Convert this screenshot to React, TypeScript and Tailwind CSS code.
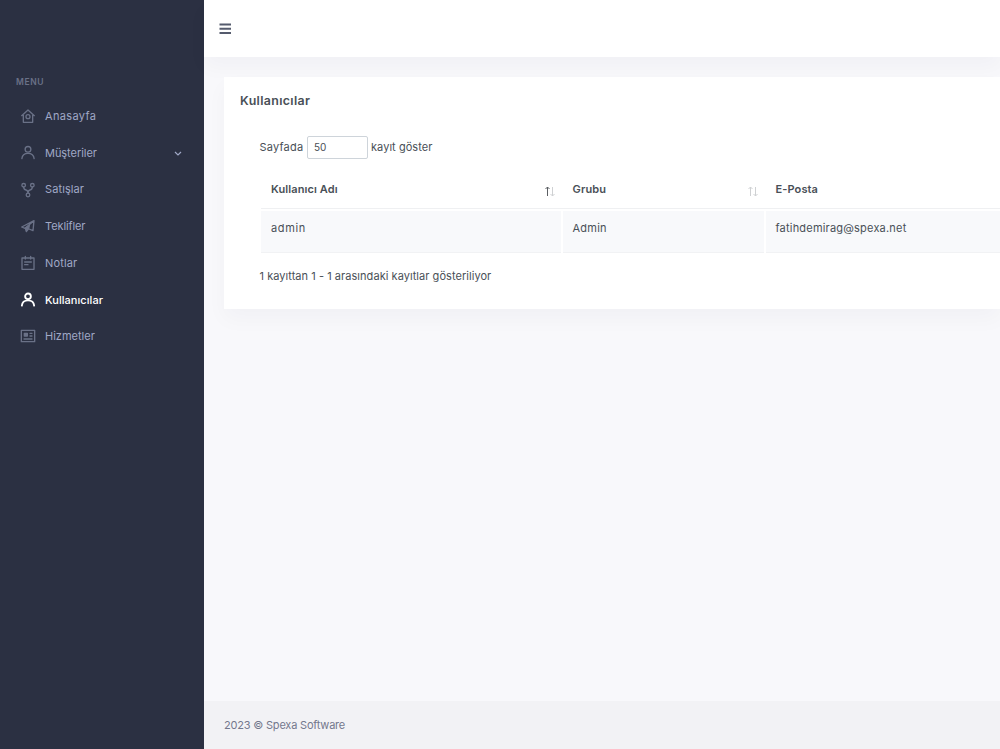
import React from "react";

interface MenuItem {
  label: string;
  icon: React.ReactNode;
  tracking: string;
  active?: boolean;
  expandable?: boolean;
}

const UserIcon = () => (
  <>
    <circle cx="12" cy="6.500" r="4.300" />
    <path d="M2.800 20.500C3.300 15.500 7 12.500 12 12.500s8.700 3 9.200 8" />
  </>
);

const MENU: MenuItem[] = [
  {
    label: "Anasayfa",
    tracking: "tracking-[0.35px]",
    icon: (
      <>
        <path d="M2.500 11.500 12 3l9.500 8.500M5 9.500V21.500h14V9.500" />
        <circle cx="12" cy="13" r="3" />
      </>
    ),
  },
  { label: "Müşteriler", tracking: "tracking-[-0.05px]", icon: <UserIcon />, expandable: true },
  {
    label: "Satışlar",
    tracking: "tracking-[0.1px]",
    icon: (
      <>
        <circle cx="5.500" cy="5" r="2.700" />
        <circle cx="18.500" cy="5" r="2.700" />
        <circle cx="12" cy="19.500" r="2.700" />
        <path d="M5.500 7.500c0 3 1.500 4 3.500 4.500s3 1.500 3 5M18.500 7.500c0 3-1.500 4-3.500 4.500s-3 1.500-3 5" />
      </>
    ),
  },
  {
    label: "Teklifler",
    tracking: "tracking-[-0.1px]",
    icon: (
      <>
        <path d="M21 4 2.500 13.500l5 2L21 4l-1.500 15-6-2.500" />
        <path fill="currentColor" d="M14 11 8 15.500l1.500 5 3.500-4.500z" />
      </>
    ),
  },
  {
    label: "Notlar",
    tracking: "tracking-[0.15px]",
    icon: <path d="M3 4.500h18V21.500H3zM8 2v4M16 2v4M7 10.500h10M7 14.500h5" />,
  },
  { label: "Kullanıcılar", tracking: "tracking-[0.05px]", icon: <UserIcon />, active: true },
  {
    label: "Hizmetler",
    tracking: "tracking-[0px]",
    icon: (
      <>
        <path d="M2 3.500h20v17H2zM15 8h3M15 12h3M6 16.500h12" />
        <path fill="currentColor" d="M6.500 8h4.500v4H6.500z" />
      </>
    ),
  },
];

const SortArrows = ({ asc = false }: { asc?: boolean }) => (
  <svg className="h-3 w-3 shrink-0 translate-y-px" viewBox="0 0 12 12" fill="none" strokeWidth="1">
    <path className={asc ? "stroke-[#5b5f63]" : "stroke-[#cfd1d3]"} d="M3.500 11V2M1.500 4l2-2 2 2" />
    <path className="stroke-[#cfd1d3]" d="M8.500 2v9M6.500 9l2 2 2-2" />
  </svg>
);

const Sidebar = () => (
  <aside className="h-full w-[204px] shrink-0 bg-[#2b3042] pt-[76px]">
    <div className="h-[22px] pl-4 text-[8.5px] leading-[12px] font-semibold tracking-[0.6px] text-[#6a7187]">
      MENU
    </div>
    <ul>
      {MENU.map((item) => (
        <li
          key={item.label}
          className={`flex h-[36.7px] items-center pr-[21px] pl-5 text-[11px] ${item.active ? "text-white" : "text-[#a0a8c6]"}`}
        >
          <svg
            className={`h-4 w-4 shrink-0 ${item.active ? "stroke-[2.8] text-white" : "stroke-2 text-[#6a7187]"}`}
            viewBox="0 0 24 24"
            fill="none"
            stroke="currentColor"
            strokeLinecap="round"
            strokeLinejoin="round"
          >
            {item.icon}
          </svg>
          <span className={`ml-[9px] whitespace-nowrap ${item.tracking} ${item.active ? "font-medium" : ""}`}>
            {item.label}
          </span>
          {item.expandable && (
            <svg className="ml-auto h-2.5 w-2.5" viewBox="0 0 10 10" fill="none" stroke="currentColor" strokeWidth="1.200">
              <path d="M2 4l3 3 3-3" />
            </svg>
          )}
        </li>
      ))}
    </ul>
  </aside>
);

const UserTable = () => (
  <div className="mt-[15px] ml-[1.5px] whitespace-nowrap">
    <div className="flex h-[35px] border-b border-[#eff0f2] text-[11px] font-semibold">
      <div className="flex w-[301.5px] items-center justify-between pr-[7px] pb-[3px] pl-[10px]">
        <span className="tracking-[0.1px]">Kullanıcı Adı</span>
        <SortArrows asc />
      </div>
      <div className="flex w-[203px] items-center justify-between pr-[7px] pb-[3px] pl-[10px]">
        <span className="tracking-[0.15px]">Grubu</span>
        <SortArrows />
      </div>
      <div className="flex grow items-center pb-[3px] pl-[10px]">
        <span className="tracking-[0.1px]">E-Posta</span>
      </div>
    </div>
    <div className="mt-[2px] flex h-[42px] gap-[2px] text-[11px] *:border-b *:border-[#f1f2f4] *:bg-[#f8f9fb] *:pt-[9px] *:pl-[10px] *:leading-[17px]">
      <div className="w-[299.5px] tracking-[0.65px]">admin</div>
      <div className="w-[201px] tracking-[0.25px]">Admin</div>
      <div className="grow tracking-[0.2px]">fatihdemirag@spexa.net</div>
    </div>
  </div>
);

export default function App() {
  return (
    <div className="flex h-[749px] w-[1000px] overflow-hidden bg-[#f8f8fb] font-['Inter',sans-serif] text-[#495057]">
      <Sidebar />
      <div className="flex min-w-0 grow flex-col">
        <header className="flex h-[57px] shrink-0 items-center bg-white pl-[15px] shadow-[0_10px_20px_rgba(18,38,63,0.03)]">
          <svg className="h-3 w-3" viewBox="0 0 12 12" fill="#555b6d">
            <path d="M.500 .500h11.500v2H.500zM.500 4.700h11.500v2H.500zM.500 8.900h11.500v2H.500z" />
          </svg>
        </header>
        <main className="grow pt-5 pl-5">
          <section className="h-[232px] bg-white pt-[15px] pl-4 shadow-[0_10px_20px_rgba(18,38,63,0.03)]">
            <h4 className="text-[12.4px] leading-[18px] font-semibold tracking-[0.35px]">Kullanıcılar</h4>
            <div className="mt-[26px] pl-[19.5px]">
              <div className="flex h-[23px] items-center text-[11px] whitespace-nowrap">
                <span className="w-[47px] tracking-[0.2px]">Sayfada</span>
                <div className="flex h-[23px] w-[61.5px] items-center rounded-[2px] border border-[#ced4da] pl-[6.5px] text-[10px]">
                  50
                </div>
                <span className="ml-[3px] tracking-[0.05px]">kayıt göster</span>
              </div>
              <UserTable />
              <p className="mt-[14px] text-[11px] leading-[18px] tracking-[0.05px] whitespace-nowrap">
                1 kayıttan 1 - 1 arasındaki kayıtlar gösteriliyor
              </p>
            </div>
          </section>
        </main>
        <footer className="flex h-12 shrink-0 items-center bg-[#f2f2f5] pl-5 text-[11px] tracking-[-0.2px] text-[#74788d]">
          2023 © Spexa Software
        </footer>
      </div>
    </div>
  );
}
